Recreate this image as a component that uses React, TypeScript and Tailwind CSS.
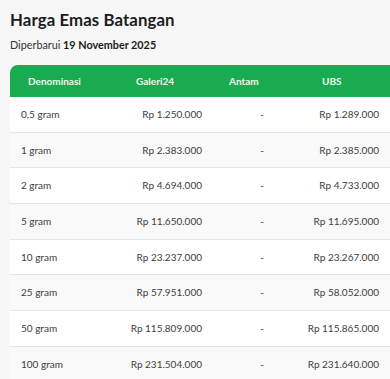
import React from 'react';

const rows = [
  { denom: '0,5 gram', galeri: 'Rp 1.250.000', antam: '-', ubs: 'Rp 1.289.000' },
  { denom: '1 gram', galeri: 'Rp 2.383.000', antam: '-', ubs: 'Rp 2.385.000' },
  { denom: '2 gram', galeri: 'Rp 4.694.000', antam: '-', ubs: 'Rp 4.733.000' },
  { denom: '5 gram', galeri: 'Rp 11.650.000', antam: '-', ubs: 'Rp 11.695.000' },
  { denom: '10 gram', galeri: 'Rp 23.237.000', antam: '-', ubs: 'Rp 23.267.000' },
  { denom: '25 gram', galeri: 'Rp 57.951.000', antam: '-', ubs: 'Rp 58.052.000' },
  { denom: '50 gram', galeri: 'Rp 115.809.000', antam: '-', ubs: 'Rp 115.865.000' },
  { denom: '100 gram', galeri: 'Rp 231.504.000', antam: '-', ubs: 'Rp 231.640.000' },
];

const cols = 'grid grid-cols-[100px_105px_92px_1fr]';

export default function App() {
  return (
    <div
      className="w-[390px] h-[379px] overflow-hidden bg-[#f7f7f7] pl-[10px] pt-[9px]"
      style={{ fontFamily: 'Lato, "Noto Sans", sans-serif' }}
    >
      <h1 className="text-[16.8px] font-bold text-[#1c1c1c] leading-[22px] tracking-[0.1px]">Harga Emas Batangan</h1>
      <p className="mt-[7px] text-[10.8px] leading-[14px] text-[#333]">
        Diperbarui <span className="font-bold text-[#1c1c1c]">19 November 2025</span>
      </p>

      <div className="mt-[13px] w-[395px] rounded-t-[8px] overflow-hidden bg-white">
        <div className={`${cols} h-[32px] items-center bg-[#1aaa50] text-[10px] font-bold text-[#eafbea]`}>
          <div className="pl-[18px]">Denominasi</div>
          <div className="pl-[26px]">Galeri24</div>
          <div className="pl-[14px]">Antam</div>
          <div className="pl-[15px]">UBS</div>
        </div>
        {rows.map((r, i) => (
          <div
            key={r.denom}
            className={`${cols} h-[35.7px] items-center border-b border-[#e6e6e6] text-[10px] text-[#3d3d3d] ${
              i % 2 === 1 ? 'bg-[#f9f9f9]' : 'bg-white'
            }`}
          >
            <div className="pl-[11px]">{r.denom}</div>
            <div className="text-right pr-[13px]">{r.galeri}</div>
            <div className="text-center pl-[2px]">{r.antam}</div>
            <div className="text-right pr-[26px]">{r.ubs}</div>
          </div>
        ))}
      </div>
    </div>
  );
}
